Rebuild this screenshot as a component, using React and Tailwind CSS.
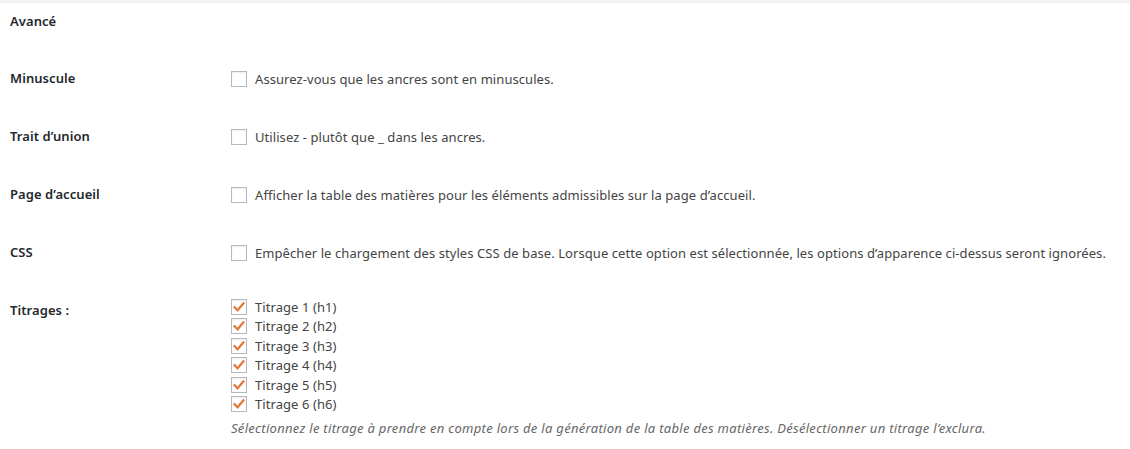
const rows = [
  { label: 'Minuscule', text: 'Assurez-vous que les ancres sont en minuscules.' },
  { label: 'Trait d’union', text: 'Utilisez - plutôt que _ dans les ancres.' },
  { label: 'Page d’accueil', text: 'Afficher la table des matières pour les éléments admissibles sur la page d’accueil.' },
  {
    label: 'CSS',
    text: 'Empêcher le chargement des styles CSS de base. Lorsque cette option est sélectionnée, les options d’apparence ci-dessus seront ignorées.',
  },
];

const headings = [1, 2, 3, 4, 5, 6];

const Checkbox = ({ checked }) => (
  <span className="flex h-4 w-4 shrink-0 items-center justify-center border border-[#b4b9be] bg-white shadow-[inset_0_1px_2px_rgba(0,0,0,0.07)]">
    {checked && (
      <svg className="h-[14px] w-[14px]" viewBox="0 0 16 16" fill="none">
        <path d="M3 8.2 L6.4 11.8 L13 3.8" stroke="#e2793a" strokeWidth="2.6" strokeLinecap="square" strokeLinejoin="miter" />
      </svg>
    )}
  </span>
);

export default function App() {
  return (
    <div className="min-h-[449px] w-[1130px] bg-white text-[13px] tracking-[0.07px] text-[#444] font-['Noto_Sans',sans-serif]">
      <div className="h-[3px] bg-[#f1f1f1]" />
      <div className="px-[10px]">
        <h2 className="mt-[8px] leading-[20px] font-semibold text-[#23282d]">Avancé</h2>

        <div className="mt-[18px]">
          {rows.map((row) => (
            <div key={row.label} className="flex h-[58px] items-center leading-[20px]">
              <div className="w-[221px] shrink-0 font-semibold text-[#23282d]">{row.label}</div>
              <label className="flex items-center gap-2 translate-y-px">
                <Checkbox />
                <span>{row.text}</span>
              </label>
            </div>
          ))}

          <div className="flex pt-[19px] leading-[20px]">
            <div className="w-[221px] shrink-0 font-semibold text-[#23282d]">Titrages :</div>
            <div className="-mt-[3px]">
              {headings.map((n) => (
                <label key={n} className="flex h-[19.5px] items-center gap-2">
                  <Checkbox checked />
                  <span>Titrage {n} (h{n})</span>
                </label>
              ))}
              <p className="mt-[4px] italic tracking-[0.3px] text-[#666]">
                Sélectionnez le titrage à prendre en compte lors de la génération de la table des matières. Désélectionner un titrage l’exclura.
              </p>
            </div>
          </div>
        </div>
      </div>
    </div>
  );
}
